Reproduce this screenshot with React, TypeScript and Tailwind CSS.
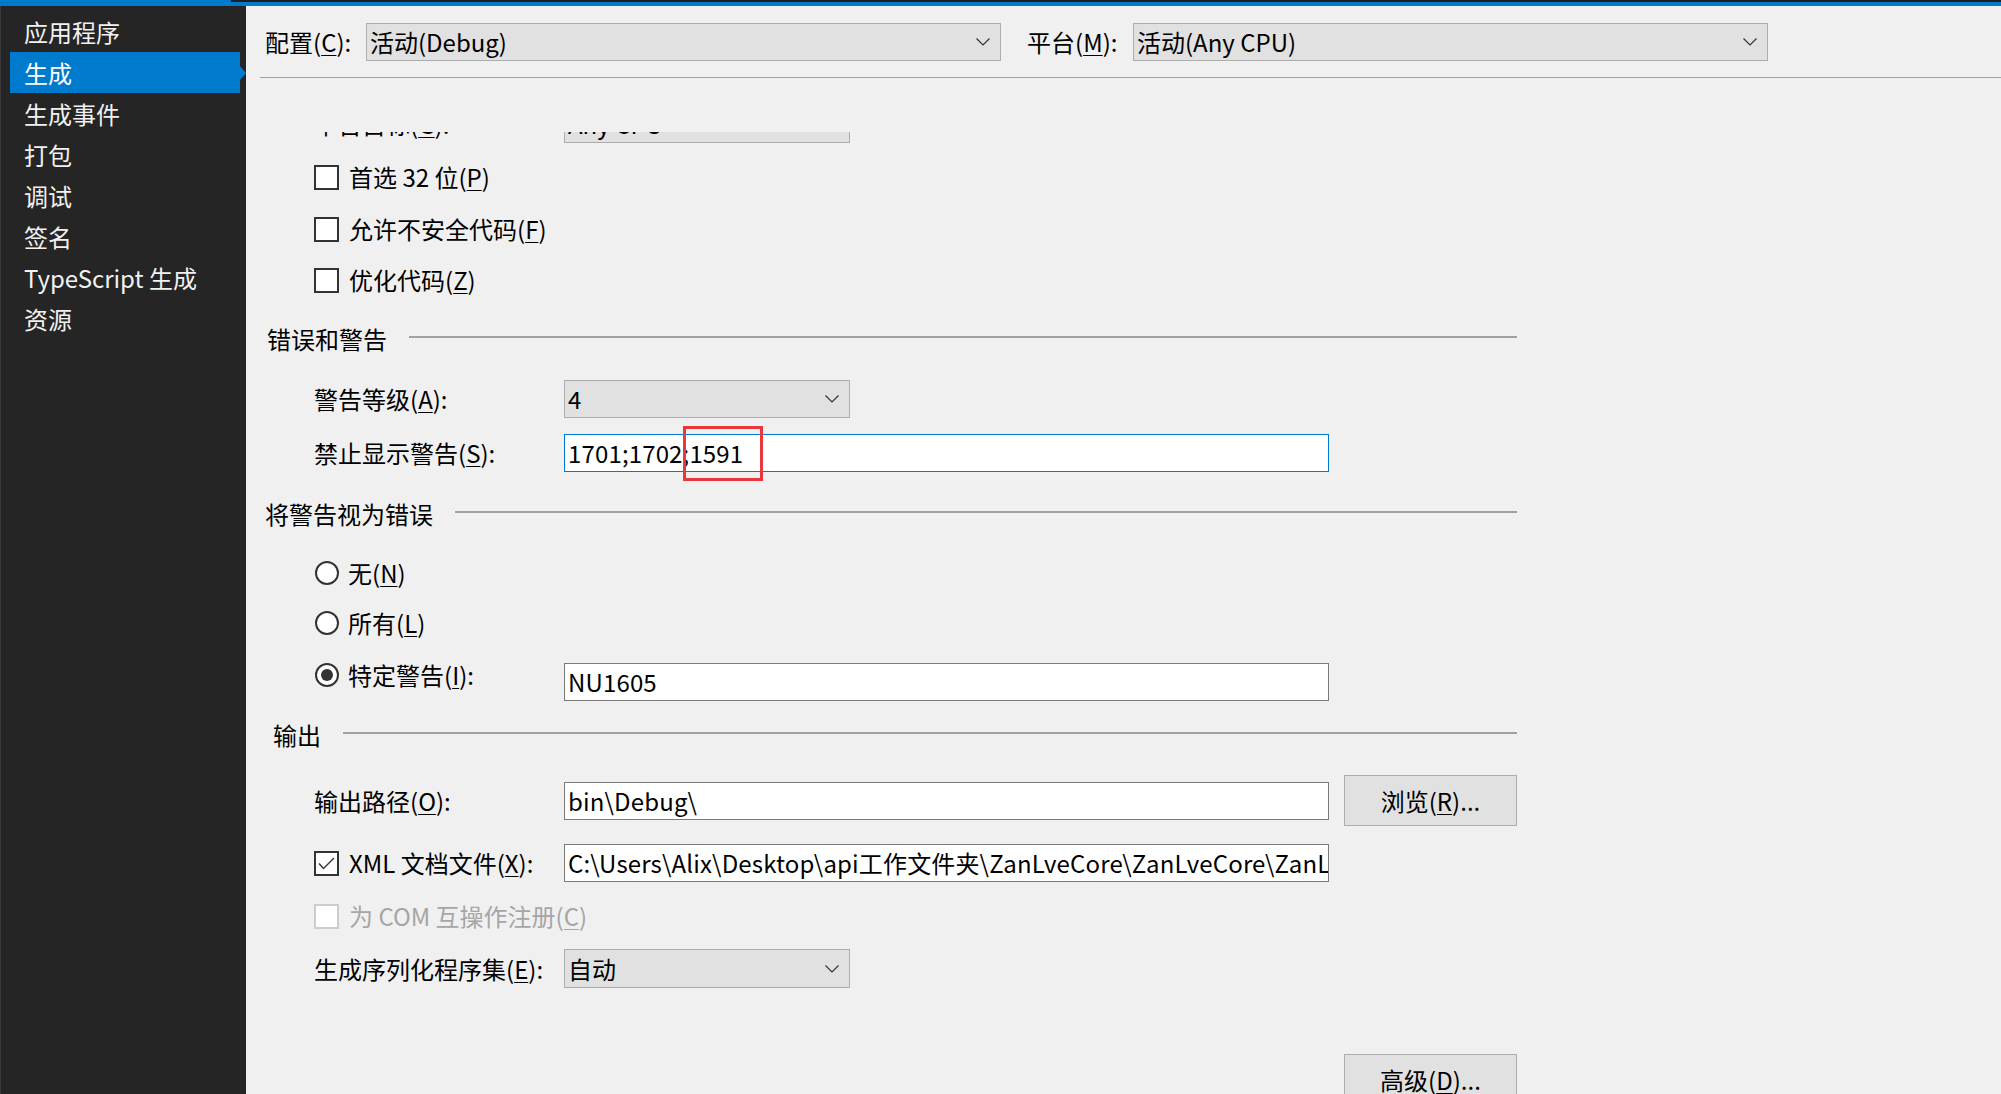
import type { ReactNode } from 'react';

const NAV = ['应用程序', '生成', '生成事件', '打包', '调试', '签名', 'TypeScript 生成', '资源'];

function U({ c }: { c: string }) {
  return <span className="underline decoration-1 underline-offset-[3px]">{c}</span>;
}

function Chevron() {
  return (
    <svg width="14" height="8" viewBox="0 0 14 8" className="shrink-0">
      <polyline points="0.5,0.5 7,7 13.5,0.5" fill="none" stroke="#333" strokeWidth="1.2" />
    </svg>
  );
}

function Dropdown({ value, className }: { value: string; className: string }) {
  return (
    <div className={`flex h-full items-center justify-between border border-[#adadad] bg-[#e1e1e1] pl-[3px] pr-[10px] ${className}`}>
      <span className="whitespace-nowrap">{value}</span>
      <Chevron />
    </div>
  );
}

function Input({ value, blue, children }: { value: string; blue?: boolean; children?: ReactNode }) {
  return (
    <div className={`relative flex h-[38px] w-[765px] items-center overflow-hidden border bg-white pl-[3px] tracking-[0.15px] ${blue ? 'border-[#0078d7]' : 'border-[#7a7a7a]'}`}>
      <span className="whitespace-nowrap">{value}</span>
      {children}
    </div>
  );
}

function Check({ checked, disabled }: { checked?: boolean; disabled?: boolean }) {
  return (
    <div className={`flex h-[25px] w-[25px] shrink-0 items-center justify-center border-2 bg-white ${disabled ? 'border-[#cccccc]' : 'border-[#333333]'}`}>
      {checked && (
        <svg width="17" height="13" viewBox="0 0 17 13">
          <polyline points="1,6.5 5.5,11.5 16,1" fill="none" stroke="#333" strokeWidth="1.4" />
        </svg>
      )}
    </div>
  );
}

function Radio({ checked }: { checked?: boolean }) {
  return (
    <div className="flex h-[24px] w-[24px] shrink-0 items-center justify-center rounded-full border-2 border-[#333333] bg-white">
      {checked && <div className="h-[12px] w-[12px] rounded-full bg-[#333333]" />}
    </div>
  );
}

function Header({ title, ml, mt }: { title: string; ml: string; mt: string }) {
  return (
    <div className={`flex h-[30px] w-[1271px] items-center ${mt}`}>
      <span className={`whitespace-nowrap ${ml}`}>{title}</span>
      <div className="-mt-[4px] ml-[22px] h-[2px] flex-1 bg-[#a0a0a0]" />
    </div>
  );
}

function Btn({ children }: { children: ReactNode }) {
  return (
    <div className="flex h-[51px] w-[173px] shrink-0 items-center justify-center border border-[#adadad] bg-[#e1e1e1]">
      {children}
    </div>
  );
}

export default function App() {
  return (
    <div className="flex h-[1094px] w-[2001px] flex-col overflow-hidden font-['Noto_Sans_CJK_SC','Noto_Sans',sans-serif] text-[24px] leading-none text-black">
      <div className="flex h-[6px] shrink-0">
        <div className="w-[231px] bg-[#007acc]" />
        <div className="flex-1 border-t-2 border-[#1e1e1e] bg-[#007acc]" />
      </div>
      <div className="flex flex-1">
        <div className="w-[246px] shrink-0 border-l border-[#3a3a3a] bg-[#252526] pt-[5px] text-[#f1f1f1]">
          {NAV.map((n, i) => (
            <div
              key={n}
              className={`relative ml-[9px] flex h-[41px] w-[230px] items-center pl-[14px] ${i === 1 ? 'bg-[#007acc] text-white' : ''}`}
            >
              {n}
              {i === 1 && (
                <span className="absolute right-[-6px] top-[14px] h-0 w-0 border-y-[7px] border-l-[6px] border-y-transparent border-l-[#007acc]" />
              )}
            </div>
          ))}
        </div>

        <div className="flex flex-1 flex-col bg-[#f0f0f0]">
          <div className="pl-[14px]">
            <div className="mt-[17px] flex h-[38px] items-center pl-[5px]">
              <span className="w-[101px] whitespace-nowrap">配置(<U c="C" />):</span>
              <Dropdown value="活动(Debug)" className="w-[635px]" />
              <span className="ml-[26px] w-[106px] whitespace-nowrap">平台(<U c="M" />):</span>
              <Dropdown value="活动(Any CPU)" className="w-[635px]" />
            </div>
            <div className="mt-[16px] h-px bg-[#a0a0a0]" />
          </div>

          <div className="mt-[54px] flex-1 overflow-hidden">
            <div className="-mt-[27px] flex flex-col">
              <div className="ml-[68px] flex h-[38px] items-center">
                <span className="w-[250px] whitespace-nowrap">平台目标(<U c="G" />):</span>
                <Dropdown value="Any CPU" className="w-[286px]" />
              </div>

              <div className="ml-[68px] mt-[15px] flex h-[38px] items-center gap-[10px]">
                <Check />
                <span>首选 32 位(<U c="P" />)</span>
              </div>
              <div className="ml-[68px] mt-[14px] flex h-[38px] items-center gap-[10px]">
                <Check />
                <span>允许不安全代码(<U c="F" />)</span>
              </div>
              <div className="ml-[68px] mt-[13px] flex h-[38px] items-center gap-[10px]">
                <Check />
                <span>优化代码(<U c="Z" />)</span>
              </div>

              <Header title="错误和警告" ml="ml-[21px]" mt="mt-[25px]" />

              <div className="ml-[68px] mt-[26px] flex h-[38px] items-center">
                <span className="w-[250px] whitespace-nowrap">警告等级(<U c="A" />):</span>
                <Dropdown value="4" className="w-[286px]" />
              </div>
              <div className="ml-[68px] mt-[16px] flex h-[38px] items-center">
                <span className="w-[250px] whitespace-nowrap">禁止显示警告(<U c="S" />):</span>
                <div className="relative">
                  <Input value="1701;1702;1591" blue />
                  <div className="absolute left-[119px] top-[-8px] h-[55px] w-[80px] border-[3px] border-[#e8383b]" />
                </div>
              </div>

              <Header title="将警告视为错误" ml="ml-[19px]" mt="mt-[27px]" />

              <div className="ml-[69px] mt-[25px] flex h-[38px] items-center gap-[9px]">
                <Radio />
                <span>无(<U c="N" />)</span>
              </div>
              <div className="ml-[69px] mt-[12px] flex h-[38px] items-center gap-[9px]">
                <Radio />
                <span>所有(<U c="L" />)</span>
              </div>
              <div className="ml-[68px] mt-[21px] flex h-[38px] items-start">
                <div className="flex h-[24px] w-[250px] items-center gap-[9px] pl-[1px]">
                  <Radio checked />
                  <span>特定警告(<U c="I" />):</span>
                </div>
                <div className="h-[37px]">
                  <Input value="NU1605" />
                </div>
              </div>

              <Header title="输出" ml="ml-[27px]" mt="mt-[19px]" />

              <div className="ml-[68px] mt-[25px] flex h-[51px] items-center">
                <span className="w-[250px] whitespace-nowrap">输出路径(<U c="O" />):</span>
                <Input value="bin\Debug\" />
                <div className="ml-[15px]">
                  <Btn>浏览(<U c="R" />)...</Btn>
                </div>
              </div>
              <div className="ml-[68px] mt-[18px] flex h-[38px] items-center">
                <div className="flex w-[250px] items-center gap-[10px]">
                  <Check checked />
                  <span className="whitespace-nowrap">XML 文档文件(<U c="X" />):</span>
                </div>
                <Input value="C:\Users\Alix\Desktop\api工作文件夹\ZanLveCore\ZanLveCore\ZanLveCore.xml" />
              </div>
              <div className="ml-[68px] mt-[15px] flex h-[38px] items-center gap-[10px] text-[#a6a6a6]">
                <Check disabled />
                <span>为 COM 互操作注册(<U c="C" />)</span>
              </div>
              <div className="ml-[68px] mt-[14px] flex h-[39px] items-center">
                <span className="w-[250px] whitespace-nowrap">生成序列化程序集(<U c="E" />):</span>
                <Dropdown value="自动" className="w-[286px]" />
              </div>

              <div className="ml-[1098px] mt-[66px] flex h-[51px]">
                <Btn>高级(<U c="D" />)...</Btn>
              </div>
            </div>
          </div>
        </div>
      </div>
    </div>
  );
}
